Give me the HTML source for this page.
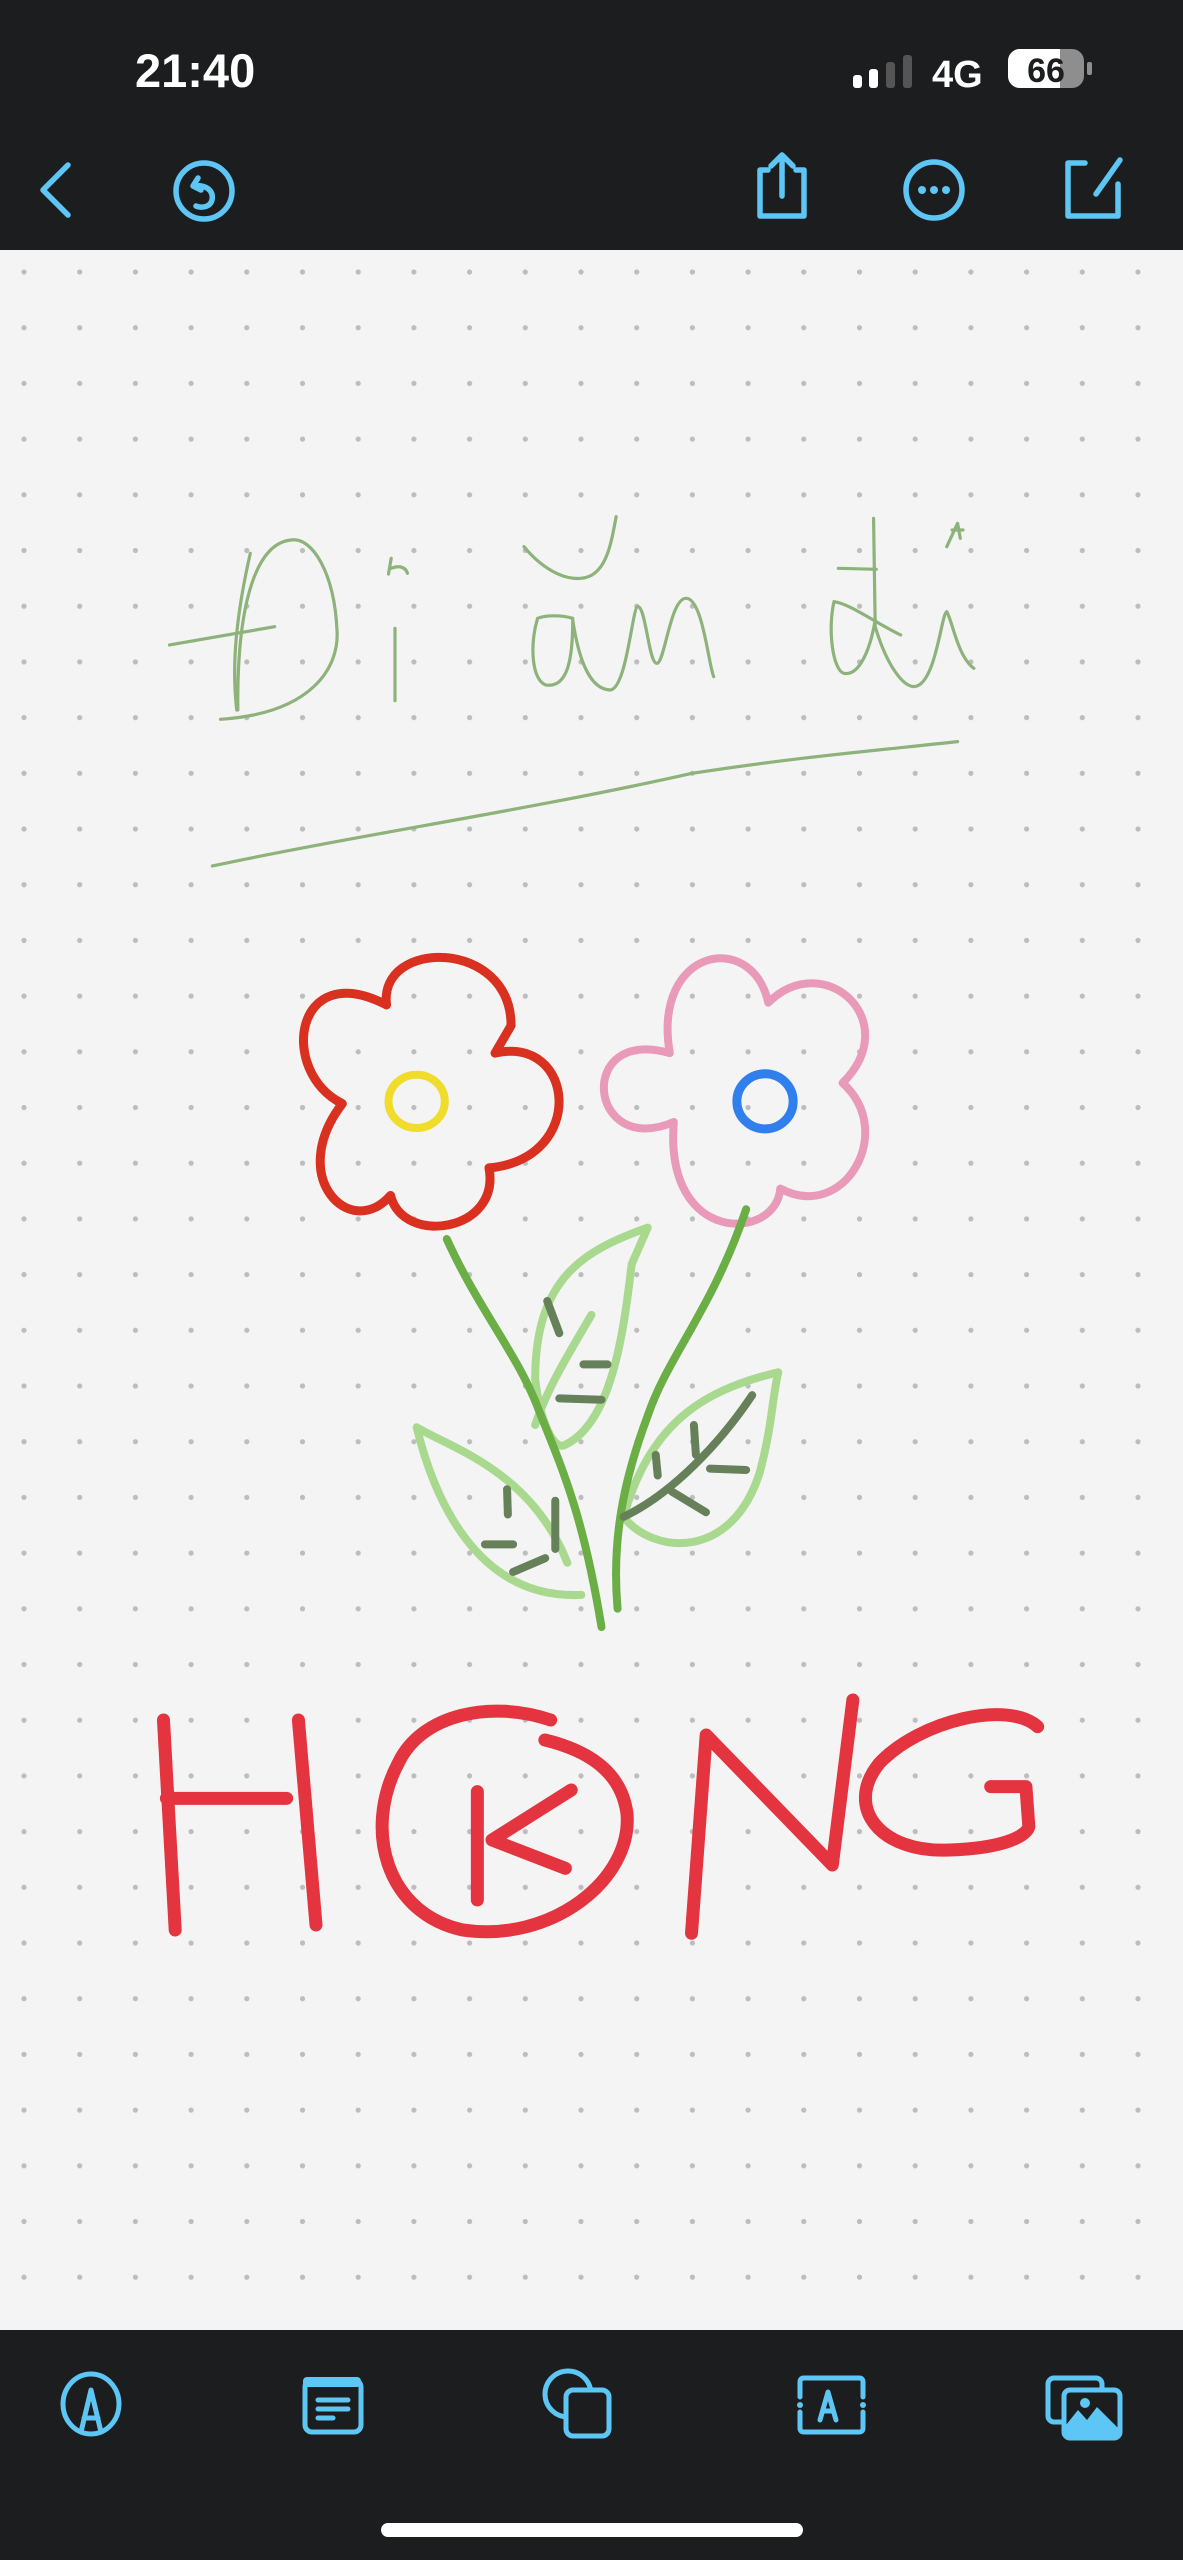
<!DOCTYPE html>
<html><head><meta charset="utf-8"><style>
html,body{margin:0;padding:0;}
body{width:1183px;height:2560px;background:#f4f4f4;position:relative;overflow:hidden;font-family:"Liberation Sans",sans-serif;}
.top{position:absolute;left:0;top:0;width:1183px;height:250px;background:#1b1d1f;}
.bot{position:absolute;left:0;top:2330px;width:1183px;height:230px;background:#1b1d1f;}
svg{position:absolute;left:0;top:0;}
</style></head><body>
<svg width="1183" height="2560" viewBox="0 0 1183 2560">
<defs>
<pattern id="dots" x="24" y="272" width="55.7" height="55.7" patternUnits="userSpaceOnUse">
<circle cx="0" cy="0" r="2.6" fill="#bdbdbd"/><circle cx="55.7" cy="0" r="2.6" fill="#bdbdbd"/><circle cx="0" cy="55.7" r="2.6" fill="#bdbdbd"/><circle cx="55.7" cy="55.7" r="2.6" fill="#bdbdbd"/>
</pattern>
</defs>
<rect x="0" y="250" width="1183" height="2080" fill="#f4f4f4"/>
<rect x="0" y="250" width="1183" height="2080" fill="url(#dots)"/>

<!-- handwriting text -->
<g transform="translate(150,480) scale(0.542,0.3333)" fill="none" stroke="#8db27a" stroke-width="3.2" stroke-linecap="round" stroke-linejoin="round">
<path vector-effect="non-scaling-stroke" d="M36,495 L230,440"/>
<path vector-effect="non-scaling-stroke" d="M185,220 C160,400 150,550 160,690"/>
<path vector-effect="non-scaling-stroke" d="M130,718 C300,700 350,560 345,450 C340,280 300,170 260,180 C200,190 160,350 162,690"/>
<path vector-effect="non-scaling-stroke" d="M452,445 L452,662"/>
<path vector-effect="non-scaling-stroke" d="M440,282 L445,235 M445,265 C460,255 472,262 475,280"/>
<path vector-effect="non-scaling-stroke" d="M690,200 C720,260 760,300 795,295 C840,290 850,200 860,110"/>
<path vector-effect="non-scaling-stroke" d="M780,415 C760,405 730,405 715,415 C700,500 705,600 730,615 C770,625 780,540 780,420 C790,530 810,630 850,630 C880,620 890,380 900,380 C915,380 920,550 935,550 C950,550 960,350 990,355 C1020,360 1030,550 1040,590"/>
<path vector-effect="non-scaling-stroke" d="M1270,265 L1340,268 M1335,115 L1338,440 C1360,560 1390,620 1410,620 C1450,615 1460,400 1470,395 C1480,420 1490,530 1520,565"/>
<path vector-effect="non-scaling-stroke" d="M1385,465 C1340,430 1290,370 1262,365 C1250,450 1260,570 1280,580 C1310,590 1330,500 1338,420"/>
<path vector-effect="non-scaling-stroke" d="M1470,200 L1490,130 L1495,175 M1480,150 L1500,150"/>
<path vector-effect="non-scaling-stroke" d="M115,1158 C400,1060 700,990 1000,880 C1200,830 1350,810 1490,785"/>
</g>

<!-- flowers -->
<g transform="translate(270,920) scale(0.4018,0.4591)" fill="none" stroke-linecap="round" stroke-linejoin="round">
<path vector-effect="non-scaling-stroke" stroke="#d9301f" stroke-width="9" d="M290,185 C270,40 600,40 600,230 L560,290 C760,250 790,520 545,540 C575,680 330,710 300,600 C200,700 40,560 180,400 C20,330 60,80 290,185 Z"/>
<ellipse vector-effect="non-scaling-stroke" stroke="#f0dc2a" stroke-width="8" cx="365" cy="395" rx="70" ry="58"/>
<path vector-effect="non-scaling-stroke" stroke="#e99ab8" stroke-width="8" d="M995,290 C950,60 1200,20 1240,180 C1380,60 1580,220 1425,355 C1560,460 1430,660 1270,585 C1260,700 980,710 1005,440 C790,520 760,230 995,290 Z"/>
<ellipse vector-effect="non-scaling-stroke" stroke="#2f7fec" stroke-width="9" cx="1232" cy="395" rx="70" ry="60"/>
<g stroke="#a9d98f" stroke-width="8">
<path vector-effect="non-scaling-stroke" d="M940,670 C780,720 660,780 660,1000 C670,1080 700,1150 730,1145 C850,1100 880,900 900,750 Z"/>
<path vector-effect="non-scaling-stroke" d="M800,860 C740,950 690,1020 660,1100"/>
<path vector-effect="non-scaling-stroke" d="M365,1105 C450,1150 650,1200 740,1400 M365,1105 C420,1300 540,1480 775,1470"/>
<path vector-effect="non-scaling-stroke" d="M1265,985 C1100,1020 950,1080 880,1300 C950,1380 1150,1400 1220,1200 C1250,1100 1250,1040 1265,985 Z"/>
</g>
<g stroke="#6aae45" stroke-width="8">
<path vector-effect="non-scaling-stroke" d="M440,695 C520,850 620,950 670,1070 C730,1200 780,1300 825,1540"/>
<path vector-effect="non-scaling-stroke" d="M1185,630 C1100,850 990,950 940,1080 C880,1220 850,1350 865,1500"/>
</g>
<g stroke="#66805a" stroke-width="8">
<path vector-effect="non-scaling-stroke" d="M1200,1035 C1120,1140 1000,1250 880,1300"/>
<path vector-effect="non-scaling-stroke" d="M690,830 L720,900 M780,968 L840,968 M720,1042 L825,1045 M590,1240 L592,1295 M710,1265 L710,1370 M535,1360 L605,1360 M605,1420 L685,1390 M1055,1100 L1060,1165 M960,1165 L965,1210 M1095,1195 L1185,1198 M1000,1245 L1085,1290"/>
</g>
</g>

<!-- HONG -->
<g transform="translate(140,1680) scale(0.5867,0.3333)" fill="none" stroke="#e3343f" stroke-width="13" stroke-linecap="round" stroke-linejoin="round">
<path vector-effect="non-scaling-stroke" d="M40,120 L60,750 M270,120 L300,735 M45,355 L250,355"/>
<path vector-effect="non-scaling-stroke" d="M700,120 C600,60 480,100 440,250 C380,450 420,700 550,750 C700,790 840,600 830,400 C820,270 760,210 690,180"/>
<path vector-effect="non-scaling-stroke" d="M575,335 L575,660 M735,330 L600,480 L725,565"/>
<path vector-effect="non-scaling-stroke" d="M940,760 L965,165 L1180,555 L1215,60"/>
<path vector-effect="non-scaling-stroke" d="M1530,140 C1480,60 1330,120 1260,250 C1200,380 1260,520 1380,510 C1470,505 1510,470 1515,440 L1510,320 L1450,320"/>
</g>

<!-- top bar -->
<rect x="0" y="0" width="1183" height="250" fill="#1b1d1f"/>
<text x="135" y="87" font-family="Liberation Sans" font-weight="bold" font-size="47" fill="#fff">21:40</text>
<rect x="853" y="75" width="9" height="13" rx="3" fill="#fff"/>
<rect x="869" y="69" width="9" height="19" rx="3" fill="#fff"/>
<rect x="886" y="62" width="9" height="26" rx="3" fill="#555"/>
<rect x="903" y="55" width="9" height="33" rx="3" fill="#555"/>
<text x="932" y="87" font-family="Liberation Sans" font-weight="bold" font-size="38" fill="#fff">4G</text>
<rect x="1008" y="49" width="76" height="39" rx="12" fill="#8e8e8e"/>
<path d="M1020,49 H1060 V88 H1020 A12,12 0 0 1 1008,76 V61 A12,12 0 0 1 1020,49 Z" fill="#fff"/>
<rect x="1087" y="62" width="5" height="13" rx="2" fill="#8e8e8e"/>
<text x="1046" y="82" text-anchor="middle" font-family="Liberation Sans" font-weight="bold" font-size="34" fill="#1b1d1f">66</text>

<g fill="none" stroke="#5ec6f4" stroke-width="5.5" stroke-linecap="round" stroke-linejoin="round">
<path d="M68,165 L43,190 L68,215"/>
<circle cx="204" cy="191" r="28"/>
<path d="M198,178 L193,186 L201,190 M193,186 C205,184 214,190 212,200 C210,208 200,208 196,206"/>
<path d="M768,170 H760 V216 H804 V170 H796"/>
<path d="M782,155 V196 M771,166 L782,155 L793,166"/>
<circle cx="934" cy="190" r="28"/>
<path d="M1085,163 H1068 V216 H1118 V184"/>
<path d="M1120,160 L1096,194"/>
</g>
<g fill="#5ec6f4"><circle cx="922" cy="190" r="4"/><circle cx="934" cy="190" r="4"/><circle cx="946" cy="190" r="4"/></g>

<!-- bottom bar -->
<rect x="0" y="2330" width="1183" height="230" fill="#1b1d1f"/>
<g fill="none" stroke="#5ec6f4" stroke-width="5" stroke-linecap="round" stroke-linejoin="round">
<ellipse cx="91" cy="2404" rx="28" ry="30"/>
<path d="M81,2432 L91,2390 L101,2432 M84,2418 H98"/>
<rect x="305" y="2380" width="56" height="52" rx="7"/>
<path d="M318,2400 H348 M318,2409 H348 M318,2418 H333"/>
<circle cx="568" cy="2394" r="23"/>
<rect x="566" y="2390" width="43" height="46" rx="7" fill="#1b1d1f"/>
<path d="M800,2397 V2382 Q800,2378 804,2378 H859 Q863,2378 863,2382 V2397 M800,2412 V2428 Q800,2432 804,2432 H859 Q863,2432 863,2428 V2412"/>
<path d="M820,2420 L828,2392 L836,2420 M823,2411 H833"/>
<rect x="1048" y="2378" width="54" height="44" rx="6"/>
<rect x="1064" y="2390" width="56" height="48" rx="6" fill="#1b1d1f"/>
</g>
<rect x="303" y="2377" width="58" height="10" rx="4" fill="#5ec6f4"/>
<circle cx="800" cy="2405" r="3" fill="#5ec6f4"/><circle cx="863" cy="2405" r="3" fill="#5ec6f4"/>
<path d="M1066,2436 V2425 L1078,2410 L1087,2420 L1097,2407 L1118,2428 V2436 Z" fill="#5ec6f4"/>
<circle cx="1085" cy="2403" r="5" fill="#5ec6f4"/>
<rect x="381" y="2523" width="422" height="14" rx="7" fill="#fff"/>
</svg>
</body></html>
